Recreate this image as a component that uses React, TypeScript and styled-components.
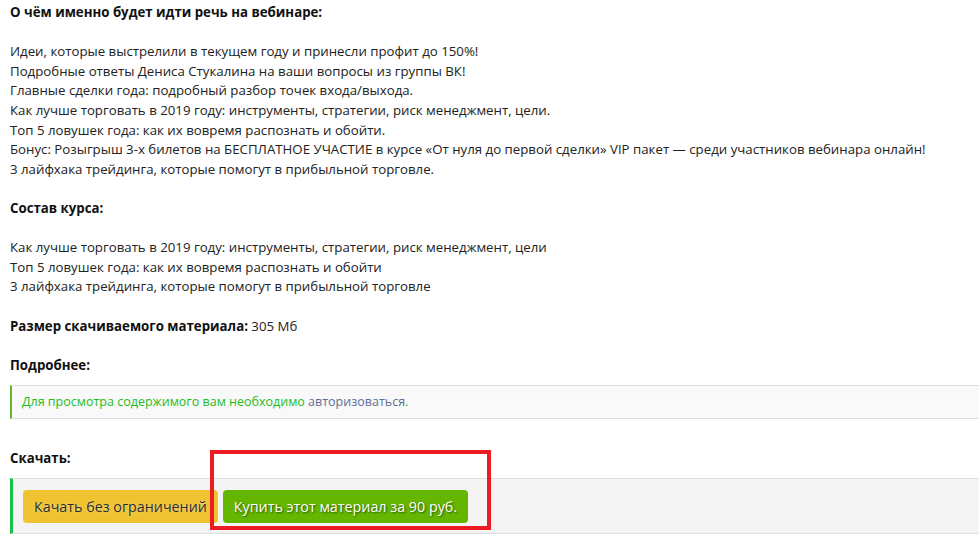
import styled, { createGlobalStyle } from 'styled-components'

const Global = createGlobalStyle`
  html, body {
    margin: 0;
    padding: 0;
    background: #fff;
  }
  body {
    font-family: "Open Sans", "Noto Sans", "DejaVu Sans", sans-serif;
    font-size: 13.25px;
    color: #222;
  }
`

const Page = styled.div`
  padding: 3px 0 0 10px;
  width: 969px;
  overflow: hidden;
  line-height: 19.6px;
`

const Para = styled.p`
  margin: 0 0 19.6px;
`

const Title = styled.strong`
  font-weight: 700;
  color: #111;
`

const Notice = styled.div`
  margin: 0 0 30px;
  padding: 6px 0 6px 10px;
  background: #f9f9f9;
  border-top: 1px solid #dedede;
  border-bottom: 1px solid #dedede;
  border-left: 2px solid #6ab52d;
  color: #1fbc1f;
  font-size: 12.5px;
`

const Link = styled.a`
  color: #5e6f96;
  text-decoration: none;
`

const DownloadBox = styled.div`
  position: relative;
  margin-top: 10px;
  padding: 11px 0 10px 10px;
  background: #f4f4f4;
  border-top: 1px solid #dedede;
  border-bottom: 1px solid #dedede;
  border-left: 3px solid #18c24a;
  display: flex;
  gap: 5px;
`

const Button = styled.a<{ tone: 'yellow' | 'green' }>`
  display: inline-flex;
  align-items: center;
  height: 33px;
  padding: 0 11px;
  border-radius: 4px;
  font-size: 14.3px;
  cursor: pointer;
  ${p => p.tone === 'yellow'
    ? `background: #f0c330; color: #2b2b2b; text-shadow: 0 0 2px rgba(255,255,255,0.6);`
    : `background: #64b600; color: #fff; text-shadow: 1px 1px 2px rgba(0,0,0,0.55);`}
`

const Highlight = styled.div`
  position: absolute;
  left: 197px;
  top: -29px;
  width: 273px;
  height: 72px;
  border: 4px solid #ed1c24;
  pointer-events: none;
`

export default function App() {
  return (
    <Page>
      <Global />
      <Para><Title>О чём именно будет идти речь на вебинаре:</Title></Para>
      <Para>
        Идеи, которые выстрелили в текущем году и принесли профит до 150%!<br />
        Подробные ответы Дениса Стукалина на ваши вопросы из группы ВК!<br />
        Главные сделки года: подробный разбор точек входа/выхода.<br />
        Как лучше торговать в 2019 году: инструменты, стратегии, риск менеджмент, цели.<br />
        Топ 5 ловушек года: как их вовремя распознать и обойти.<br />
        Бонус: Розыгрыш 3-х билетов на БЕСПЛАТНОЕ УЧАСТИЕ в курсе «От нуля до первой сделки» VIP пакет — среди участников вебинара онлайн!<br />
        3 лайфхака трейдинга, которые помогут в прибыльной торговле.
      </Para>
      <Para><Title>Состав курса:</Title></Para>
      <Para>
        Как лучше торговать в 2019 году: инструменты, стратегии, риск менеджмент, цели<br />
        Топ 5 ловушек года: как их вовремя распознать и обойти<br />
        3 лайфхака трейдинга, которые помогут в прибыльной торговле
      </Para>
      <Para><Title>Размер скачиваемого материала:</Title> 305 Мб</Para>
      <Para style={{ marginBottom: 10 }}><Title>Подробнее:</Title></Para>
      <Notice>
        Для просмотра содержимого вам необходимо <Link href="#">авторизоваться</Link>.
      </Notice>
      <Para style={{ margin: 0 }}><Title>Скачать:</Title></Para>
      <DownloadBox>
        <Button tone="yellow">Качать без ограничений</Button>
        <Button tone="green">Купить этот материал за 90 руб.</Button>
        <Highlight />
      </DownloadBox>
    </Page>
  )
}
